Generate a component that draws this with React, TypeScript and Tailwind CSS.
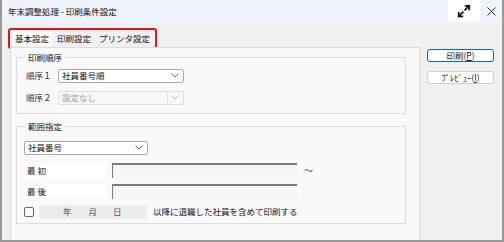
import React from 'react';

const font = { fontFamily: '"Noto Sans CJK JP", "Noto Sans", sans-serif' };

const Chevron = ({ color = '#555' }: { color?: string }) => (
  <svg width="8" height="5" viewBox="0 0 8 5" className="mr-[4px]">
    <polyline points="0.5,0.5 4,4 7.5,0.5" fill="none" stroke={color} strokeWidth="1" />
  </svg>
);

const Select = ({ value, width, disabled }: { value: string; width: string; disabled?: boolean }) => (
  <div
    className={`${width} h-[14px] flex items-center justify-between rounded-[2px] border ${
      disabled ? 'border-[#dedede] bg-[#f7f7f7] text-[#a0a0a0]' : 'border-[#a8a8a8] bg-white text-[#111]'
    }`}
  >
    <span className="pl-[3px] text-[8.5px] leading-none">{value}</span>
    <div className={`h-full flex items-center ${disabled ? 'border-l border-[#e4e4e4] pl-[3px]' : ''}`}>
      <Chevron color={disabled ? '#bbb' : '#666'} />
    </div>
  </div>
);

const Tab = ({ label, active }: { label: string; active?: boolean }) => (
  <div
    className={`h-[15px] px-[3px] flex items-center whitespace-nowrap text-[8.5px] leading-none text-[#111] ${
      active ? 'bg-white' : 'bg-[#f0f0f0]'
    }`}
  >
    {label}
  </div>
);

export default function App() {
  return (
    <div
      className="w-[504px] h-[242px] bg-[#f0f0f0] border-l-2 border-r-2 border-b-2 border-[#9a9a9a] flex flex-col overflow-hidden"
      style={font}
    >
      {/* title bar */}
      <div className="h-[22px] shrink-0 flex items-center bg-[#eef3f9]">
        <span className="pl-[6px] text-[8.5px] text-[#111] flex-1">年末調整処理 - 印刷条件設定</span>
        <div className="w-[32px] h-[22px] bg-white flex items-center justify-center">
          <svg width="14" height="14" viewBox="0 0 24 24" fill="none" stroke="#111" strokeWidth="3" strokeLinecap="square">
            <polyline points="15 3 21 3 21 9" />
            <polyline points="9 21 3 21 3 15" />
            <line x1="21" y1="3" x2="14" y2="10" />
            <line x1="3" y1="21" x2="10" y2="14" />
          </svg>
        </div>
        <div className="w-[22px] flex items-center justify-center">
          <svg width="9" height="9" viewBox="0 0 9 9" stroke="#333" strokeWidth="1">
            <line x1="0.5" y1="0.5" x2="8.5" y2="8.5" />
            <line x1="8.5" y1="0.5" x2="0.5" y2="8.5" />
          </svg>
        </div>
      </div>

      {/* tabs */}
      <div className="pl-[6px] pt-[6px] flex">
        <div className="flex items-center gap-[2px] border-2 border-[#e8101a] rounded-[3px] px-[2px] py-[1px] whitespace-nowrap">
          <Tab label="基本設定" active />
          <Tab label="印刷設定" />
          <Tab label="プリンタ設定" />
        </div>
      </div>

      <div className="flex flex-1 min-h-0">
        {/* tab page */}
        <div className="ml-[8px] w-[410px] h-[196px] -mt-[2px] bg-[#f9f9f9] border border-[#dddddd] px-[5px] pt-[5px]">
          <fieldset className="border border-[#dcdcdc] w-[390px] h-[61px] px-[6px]">
            <legend className="ml-[2px] px-[3px] text-[8.5px] leading-none text-[#111]">印刷順序</legend>
            <div className="flex flex-col gap-[8px] pt-[7px]">
              <div className="flex items-center">
                <span className="w-[35px] pl-[3px] text-[8.5px] leading-none text-[#333]">順序１</span>
                <Select value="社員番号順" width="w-[126px]" />
              </div>
              <div className="flex items-center">
                <span className="w-[35px] pl-[3px] text-[8.5px] leading-none text-[#333]">順序２</span>
                <Select value="設定なし" width="w-[126px]" disabled />
              </div>
            </div>
          </fieldset>

          <fieldset className="mt-[8px] border border-[#dcdcdc] w-[390px] h-[102px] px-[7px]">
            <legend className="ml-[1px] px-[3px] text-[8.5px] leading-none text-[#111]">範囲指定</legend>
            <div className="flex flex-col pt-[10px]">
              <Select value="社員番号" width="w-[124px]" />
              <div className="flex items-center mt-[8px] gap-[5px]">
                <div className="w-[83px] h-[15px] bg-white flex items-center pl-[3px] text-[8.5px] leading-none text-[#111]">最 初</div>
                <div className="w-[185px] h-[15px] bg-[#f6f6f6] border-t-2 border-l border-[#7a7a7a]" />
                <span className="ml-[2px] text-[9px] leading-none text-[#444]">～</span>
              </div>
              <div className="flex items-center mt-[6px] gap-[5px]">
                <div className="w-[83px] h-[15px] bg-white flex items-center pl-[3px] text-[8.5px] leading-none text-[#111]">最 後</div>
                <div className="w-[185px] h-[15px] bg-[#f6f6f6] border-t-2 border-l border-[#7a7a7a]" />
              </div>
              <div className="flex items-center mt-[6px]">
                <div className="w-[10px] h-[10px] rounded-[2px] border border-[#666] bg-white" />
                <div className="ml-[5px] w-[108px] h-[14px] bg-[#ececec] flex items-center text-[8.5px] leading-none text-[#555]">
                  <span className="ml-[24px]">年</span>
                  <span className="ml-[17px]">月</span>
                  <span className="ml-[16px]">日</span>
                </div>
                <span className="ml-[6px] text-[8.5px] leading-none text-[#111]">以降に退職した社員を含めて印刷する</span>
              </div>
            </div>
          </fieldset>
        </div>

        {/* buttons */}
        <div className="flex flex-col gap-[9px] pl-[7px]">
          <button className="w-[67px] h-[13px] rounded-[3px] border border-[#0a64c8] bg-white text-[8.5px] leading-none text-[#111] flex items-center justify-center">
            印刷(<span className="underline">P</span>)
          </button>
          <button className="w-[67px] h-[13px] rounded-[3px] border border-[#cfcfcf] bg-white text-[8.5px] leading-none text-[#111] flex items-center justify-center">
            ﾌﾟﾚﾋﾞｭｰ(<span className="underline">I</span>)
          </button>
        </div>
      </div>
    </div>
  );
}
